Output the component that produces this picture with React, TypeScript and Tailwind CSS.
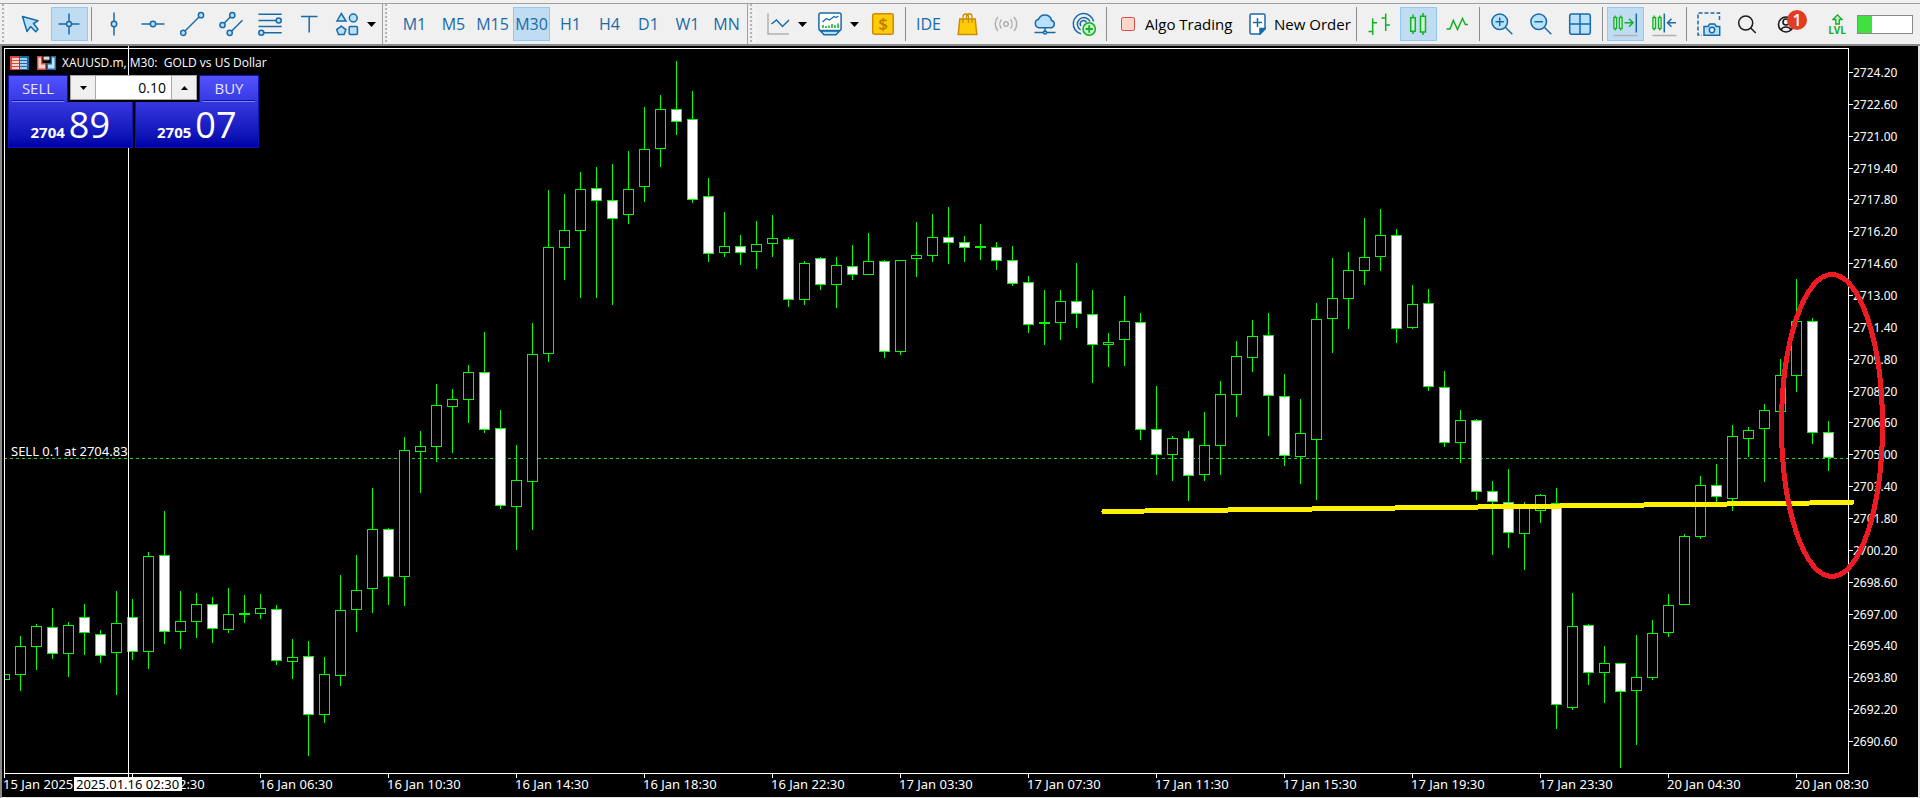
import React, { useState } from 'react';
import clsx from 'clsx';

const BLUE = '#1a6aa8';
const SKY = '#b8e2fb';
const GREEN = '#12b024';
const MINT = '#c9f5cf';
const GRAY = '#b0b0b0';

// [high, body top, body bottom, low, bearish]
type Candle = [number, number, number, number, number];

const candles: Candle[] = [
  [674, 674, 680, 680, 0],
  [636, 646, 675, 691, 0],
  [624, 626, 647, 670, 0],
  [608, 627, 654, 659, 1],
  [622, 625, 654, 677, 0],
  [604, 617, 633, 655, 1],
  [630, 634, 656, 663, 1],
  [591, 623, 653, 695, 0],
  [599, 617, 652, 660, 1],
  [552, 556, 652, 669, 0],
  [511, 555, 632, 644, 1],
  [591, 621, 632, 649, 0],
  [593, 604, 622, 638, 0],
  [597, 604, 629, 643, 1],
  [588, 614, 630, 633, 0],
  [595, 613, 615, 623, 0],
  [594, 608, 614, 619, 0],
  [605, 609, 661, 665, 1],
  [639, 657, 662, 679, 0],
  [641, 656, 715, 756, 1],
  [657, 674, 715, 723, 0],
  [575, 610, 676, 686, 0],
  [555, 590, 610, 632, 0],
  [488, 529, 589, 613, 0],
  [528, 529, 577, 605, 1],
  [437, 450, 577, 606, 0],
  [431, 446, 452, 493, 0],
  [384, 405, 447, 462, 0],
  [389, 399, 407, 453, 0],
  [365, 372, 400, 423, 0],
  [332, 372, 430, 433, 1],
  [410, 428, 506, 509, 1],
  [445, 480, 507, 550, 0],
  [323, 354, 482, 530, 0],
  [190, 247, 354, 362, 0],
  [194, 230, 248, 280, 0],
  [172, 189, 231, 298, 0],
  [167, 188, 201, 298, 1],
  [164, 200, 219, 305, 1],
  [151, 189, 215, 224, 0],
  [107, 149, 187, 202, 0],
  [95, 109, 149, 167, 0],
  [61, 109, 122, 135, 1],
  [91, 119, 200, 203, 1],
  [178, 196, 254, 262, 1],
  [212, 246, 253, 257, 0],
  [235, 246, 253, 265, 1],
  [221, 244, 252, 269, 0],
  [215, 238, 244, 257, 0],
  [237, 239, 300, 307, 1],
  [261, 263, 300, 305, 0],
  [257, 258, 285, 290, 1],
  [257, 265, 285, 308, 0],
  [245, 266, 275, 280, 1],
  [233, 261, 275, 275, 0],
  [260, 261, 352, 358, 1],
  [260, 260, 352, 355, 0],
  [222, 255, 259, 277, 0],
  [214, 237, 256, 262, 0],
  [207, 237, 243, 264, 1],
  [236, 242, 248, 262, 1],
  [224, 246, 248, 260, 0],
  [242, 247, 261, 270, 1],
  [246, 260, 284, 286, 1],
  [276, 282, 325, 333, 1],
  [290, 322, 324, 345, 0],
  [290, 301, 323, 340, 0],
  [263, 301, 314, 328, 1],
  [290, 314, 345, 383, 1],
  [333, 342, 345, 367, 0],
  [296, 321, 340, 366, 0],
  [313, 322, 430, 440, 1],
  [386, 429, 455, 475, 1],
  [436, 438, 455, 481, 0],
  [431, 438, 476, 501, 1],
  [412, 445, 475, 481, 0],
  [381, 394, 446, 475, 0],
  [341, 356, 395, 417, 0],
  [320, 336, 358, 372, 0],
  [313, 335, 396, 436, 1],
  [374, 396, 456, 466, 1],
  [399, 433, 457, 484, 0],
  [303, 319, 440, 500, 0],
  [258, 298, 319, 353, 0],
  [252, 270, 299, 329, 0],
  [218, 257, 271, 285, 0],
  [209, 235, 257, 271, 0],
  [229, 235, 329, 343, 1],
  [285, 304, 328, 329, 0],
  [289, 303, 387, 391, 1],
  [371, 387, 443, 447, 1],
  [410, 420, 443, 463, 0],
  [419, 420, 492, 500, 1],
  [481, 491, 502, 555, 1],
  [469, 502, 533, 548, 1],
  [502, 505, 534, 570, 0],
  [494, 495, 511, 523, 0],
  [488, 503, 705, 729, 1],
  [593, 626, 708, 710, 0],
  [624, 625, 673, 685, 1],
  [646, 663, 673, 703, 0],
  [663, 663, 692, 768, 1],
  [635, 677, 691, 745, 0],
  [620, 633, 678, 680, 0],
  [594, 605, 633, 637, 0],
  [534, 536, 605, 605, 0],
  [476, 485, 537, 539, 0],
  [464, 485, 497, 502, 1],
  [425, 436, 499, 511, 0],
  [427, 430, 439, 457, 0],
  [404, 410, 429, 482, 0],
  [359, 375, 412, 412, 0],
  [279, 321, 376, 392, 0],
  [318, 321, 433, 444, 1],
  [421, 432, 458, 471, 1],
];

const prices = Array.from({ length: 22 }, (_, i) => (2724.2 - i * 1.6).toFixed(2));

const times = [
  '15 Jan 2025',
  '16 Jan 02:30',
  '16 Jan 06:30',
  '16 Jan 10:30',
  '16 Jan 14:30',
  '16 Jan 18:30',
  '16 Jan 22:30',
  '17 Jan 03:30',
  '17 Jan 07:30',
  '17 Jan 11:30',
  '17 Jan 15:30',
  '17 Jan 19:30',
  '17 Jan 23:30',
  '20 Jan 04:30',
  '20 Jan 08:30',
];

const timeframes = ['M1', 'M5', 'M15', 'M30', 'H1', 'H4', 'D1', 'W1', 'MN'];

interface IconProps {
  children: React.ReactNode;
  color?: string;
  width?: number;
}

const Icon = ({ children, color = BLUE, width = 1.5 }: IconProps) => (
  <svg
    className="h-[26px] w-[25px] shrink-0"
    viewBox="0 0 25 26"
    fill="none"
    stroke={color}
    strokeWidth={width}
    aria-hidden="true"
  >
    {children}
  </svg>
);

interface ToolProps {
  label: string;
  active?: boolean;
  onClick?: () => void;
  children: React.ReactNode;
}

const Tool = ({ label, active, onClick, children }: ToolProps) => (
  <button
    type="button"
    aria-label={label}
    onClick={onClick}
    className={clsx(
      'flex h-[34px] w-[37px] shrink-0 items-center justify-center border text-base leading-5 text-[#1a6aa8]',
      active ? 'border-[#90c8f6] bg-[#c0dcf3]' : 'border-transparent'
    )}
  >
    {children}
  </button>
);

const Divider = () => (
  <div className="flex h-[34px] w-1 shrink-0 pl-px">
    <div className="w-px bg-[#8c8c8c]" />
  </div>
);

const Grip = () => (
  <div className="flex w-2 shrink-0 gap-[2px] self-stretch pl-[2px]">
    <div className="w-[2px] bg-[repeating-linear-gradient(180deg,#b4b4b4_0_2px,transparent_2px_4px)]" />
    <div className="w-px bg-[repeating-linear-gradient(180deg,#ffffff_0_2px,transparent_2px_4px)]" />
  </div>
);

const Caret = () => (
  <svg className="h-[5px] w-[9px] shrink-0" viewBox="0 0 9 5" aria-hidden="true">
    <path d="M0 0h9L4.500 5z" fill="#000" />
  </svg>
);

const MiniCandles = () => (
  <g stroke={GREEN} strokeWidth={1.3} fill={MINT}>
    <path d="M2.200 4.500v15M7.700 4.500v15" />
    <rect x="0.900" y="6.500" width="2.700" height="11" />
    <rect x="6.400" y="6.500" width="2.700" height="11" />
  </g>
);

const Toolbar = () => {
  const [tool, setTool] = useState('Crosshair');
  const [frame, setFrame] = useState('M30');

  return (
    <header className="flex flex-col overflow-hidden bg-[#f0f0f0] pt-[3px]">
      <div className="flex h-[43px] items-center whitespace-nowrap border-t border-b-2 border-t-[#a0a0a0] border-b-[#8a8a8a]">
        {/* Drawing tools */}
        <div className="flex shrink-0 items-center self-stretch border-r border-[#a0a0a0] pr-1">
          <Grip />
          <div className="flex items-center gap-[2px] pl-1">
            <Tool label="Cursor" active={tool === 'Cursor'} onClick={() => setTool('Cursor')}>
              <Icon>
                <path d="M4.500 5.500 20 9.800l-4.500 2.700 4.500 5.700-2.300 2.600-5-5.300-3.700 5z" fill={SKY} strokeLinejoin="round" />
              </Icon>
            </Tool>
            <Tool label="Crosshair" active={tool === 'Crosshair'} onClick={() => setTool('Crosshair')}>
              <Icon>
                <path d="M1.500 13h21M12 2.500v21" />
                <circle cx="12" cy="13" r="2.500" fill={SKY} />
              </Icon>
            </Tool>
            <Divider />
            <Tool label="Vertical line" active={tool === 'Vertical'} onClick={() => setTool('Vertical')}>
              <Icon>
                <path d="M12 1.500v23" />
                <circle cx="12" cy="13" r="2.700" fill={SKY} />
              </Icon>
            </Tool>
            <Tool label="Horizontal line" active={tool === 'Horizontal'} onClick={() => setTool('Horizontal')}>
              <Icon>
                <path d="M0.500 13h23" />
                <circle cx="12" cy="13" r="2.700" fill={SKY} />
              </Icon>
            </Tool>
            <Tool label="Trendline" active={tool === 'Trend'} onClick={() => setTool('Trend')}>
              <Icon>
                <path d="M3 22 21 4" />
                <circle cx="3.200" cy="21.800" r="2.600" fill={SKY} />
                <circle cx="21" cy="4.200" r="2.600" fill={SKY} />
              </Icon>
            </Tool>
            <Tool label="Channel" active={tool === 'Channel'} onClick={() => setTool('Channel')}>
              <Icon>
                <path d="M3.300 14l10-10M10.700 22 23.500 9.300" />
                <circle cx="3.500" cy="14" r="2.600" fill={SKY} />
                <circle cx="13.300" cy="4.200" r="2.600" fill={SKY} />
                <circle cx="10.700" cy="21.800" r="2.600" fill={SKY} />
              </Icon>
            </Tool>
            <Tool label="Fibonacci" active={tool === 'Fibonacci'} onClick={() => setTool('Fibonacci')}>
              <Icon>
                <path d="M0.500 3.300h23.200M0.500 9.500h23.200M0.500 15.500h23.200M0.500 21.700h23.200" />
                <circle cx="20.700" cy="9.500" r="2.500" fill={SKY} />
                <circle cx="3.300" cy="21.700" r="2.500" fill={SKY} />
              </Icon>
            </Tool>
            <Tool label="Text" active={tool === 'Text'} onClick={() => setTool('Text')}>
              <Icon>
                <path d="M4 5.500h16.500M12.200 5.500v16" />
              </Icon>
            </Tool>
            <button type="button" aria-label="Shapes" className="flex h-[34px] w-12 shrink-0 items-center gap-[7px] pl-[5px]">
              <Icon>
                <path d="M6.300 2.500 2 10h9z" fill={SKY} />
                <circle cx="18.300" cy="7" r="3.900" fill={SKY} />
                <path d="M6.300 15.200l4.600 3.400-1.800 5H3.500l-1.800-5z" fill={SKY} />
                <rect x="14.200" y="15.400" width="8.200" height="8.200" rx="1" fill={SKY} />
              </Icon>
              <Caret />
            </button>
          </div>
        </div>

        {/* Timeframes */}
        <div className="flex shrink-0 items-center self-stretch border-r border-[#a0a0a0] pr-[2px]">
          <Grip />
          <div className="flex items-center gap-[2px] pl-[5px]">
            {timeframes.map((name) => (
              <Tool key={name} label={name} active={frame === name} onClick={() => setFrame(name)}>
                {name}
              </Tool>
            ))}
          </div>
        </div>

        {/* Standard */}
        <div className="flex min-w-0 flex-1 items-center self-stretch">
          <Grip />
          <div className="flex min-w-0 flex-1 items-center gap-[2px] pl-1">
            <button type="button" aria-label="Line studies" className="flex h-[34px] w-[50px] shrink-0 items-center gap-[7px] pl-[6px]">
              <Icon>
                <path d="M2 2.500V23h21" stroke={GRAY} />
                <path d="M5.500 13l5-4 6 6.500 6.500-6.500" />
              </Icon>
              <Caret />
            </button>
            <button type="button" aria-label="Indicators" className="flex h-[34px] w-[51px] shrink-0 items-center gap-[7px] pl-[6px]">
              <Icon>
                <path d="M2.500 20 6 23.700h12l3.500-3.700z" fill={SKY} />
                <rect x="0.900" y="2" width="22.200" height="17.500" rx="2" fill="#fff" />
                <path d="M4.500 11l4-3.500 3 1.500 4.500-3.500 2 1 2.500-1.500" strokeWidth={1.3} />
                <path d="M5 14v3M8 15v2M11 14.500v2.500M14 13v4M17 14v3M20 12.500v4.500" stroke={GREEN} />
              </Icon>
              <Caret />
            </button>
            <Tool label="Quotes">
              <Icon color="#c98d08">
                <rect x="1.700" y="2.700" width="20.600" height="20.600" rx="2" fill="#fdcb08" />
                <text x="12" y="19" textAnchor="middle" fontSize="17" fontWeight="600" fill="#b87d05" stroke="none">$</text>
              </Icon>
            </Tool>
            <Divider />
            <Tool label="IDE">IDE</Tool>
            <Tool label="Market">
              <Icon color="#c98d08">
                <path d="M4.800 8h15.400l1.600 15.500H3.200z" fill="#fdcb08" />
                <path d="M8 12V6c0-4 5.500-4 5.500 0v6M11.500 8V5c0-3 5.500-3 5.500 0v7" strokeWidth={1.3} />
              </Icon>
            </Tool>
            <Tool label="Signals">
              <Icon color={GRAY}>
                <circle cx="12" cy="13" r="2.300" />
                <path d="M7.500 8.500a7 7 0 0 0 0 9M16.500 8.500a7 7 0 0 1 0 9M4 6a10.500 10.500 0 0 0 0 14M20 6a10.500 10.500 0 0 1 0 14" />
              </Icon>
            </Tool>
            <Tool label="Virtual hosting">
              <Icon>
                <path d="M6 16.700a4.300 4.300 0 0 1-.5-8.400 6.800 6.800 0 0 1 13 1.200 3.700 3.700 0 0 1 0 7.200z" fill={SKY} />
                <path d="M12 17v4M1.500 21.500h21" />
                <circle cx="12" cy="21.500" r="1.600" fill={SKY} />
              </Icon>
            </Tool>
            <Tool label="Add service">
              <Icon>
                <path d="M9 22.800A10.300 10.300 0 1 1 21.600 10.500M8.500 18.800A6.600 6.600 0 1 1 18 10.500M9 15a3.300 3.300 0 1 1 5.500-3.500" />
                <circle cx="17.200" cy="18" r="6.200" fill={MINT} stroke={GREEN} />
                <path d="M13.500 18h7.400M17.200 14.300v7.400" stroke={GREEN} strokeWidth={1.8} />
              </Icon>
            </Tool>
            <Divider />
            <button type="button" className="flex h-[34px] w-32 shrink-0 items-center gap-[10px] pl-[10px] text-[15px] text-black">
              <span className="h-[14px] w-[14px] rounded-[2px] border border-[#de5044] bg-[#fdd5cb]" />
              Algo Trading
            </button>
            <button type="button" className="flex h-[34px] w-28 shrink-0 items-center gap-2 pl-2 text-[15px] text-black">
              <svg className="h-[22px] w-[17px] shrink-0" viewBox="0 0 17 22" fill="none" stroke={BLUE} strokeWidth={1.5} aria-hidden="true">
                <path d="M2.500 0.900h12a1.500 1.500 0 0 1 1.500 1.500V16l-5 5H2.500A1.500 1.500 0 0 1 1 19.500V2.400A1.500 1.500 0 0 1 2.500 0.900z" fill="#fff" />
                <path d="M16 15.500h-5V21z" fill={BLUE} />
                <path d="M4 9.500h9M8.500 5v9" />
              </svg>
              New Order
            </button>
            <Divider />
            <Tool label="Bar chart">
              <Icon color={GREEN}>
                <path d="M5.700 7.500v16.500M1.500 20.500h4.200M5.700 11.700H10M18.700 2.500V20M14.500 7h4.200M18.700 14H23" />
              </Icon>
            </Tool>
            <Tool label="Candlesticks" active>
              <Icon color={GREEN}>
                <path d="M7 3.500v19.500M17 2v22" />
                <rect x="4.700" y="6.700" width="4.600" height="13.600" fill={MINT} />
                <rect x="14.500" y="5.300" width="5" height="15.700" fill={MINT} />
              </Icon>
            </Tool>
            <Tool label="Line chart">
              <Icon color={GREEN}>
                <path d="M1.500 18H5L8.300 9.500l4.200 9L17.500 7.500l2.800 6H23" />
              </Icon>
            </Tool>
            <Divider />
            <Tool label="Zoom in">
              <Icon>
                <circle cx="9.700" cy="10.700" r="7.800" fill={SKY} />
                <path d="M15.300 16.300l7 7M5.500 10.700h8.400M9.700 6.500v8.400" />
              </Icon>
            </Tool>
            <Tool label="Zoom out">
              <Icon>
                <circle cx="9.700" cy="10.700" r="7.800" fill={SKY} />
                <path d="M15.300 16.300l7 7M5.500 10.700h8.400" />
              </Icon>
            </Tool>
            <Tool label="Tile windows">
              <Icon>
                <rect x="1.700" y="3" width="20.600" height="20.300" rx="2" fill={SKY} />
                <path d="M12 3v20.300M1.700 13h20.600" />
              </Icon>
            </Tool>
            <Divider />
            <Tool label="Auto scroll" active>
              <Icon>
                <MiniCandles />
                <path d="M11.500 11.700H20M16 7.700l4 4-4 4" stroke={GREEN} />
                <path d="M23.300 2.500v19" />
                <path d="M0.500 24.500h24" stroke={GRAY} />
              </Icon>
            </Tool>
            <Tool label="Chart shift">
              <Icon>
                <MiniCandles />
                <path d="M12.300 2.500v19M24 11.700h-8.500M19.500 7.700l-4 4 4 4" />
                <path d="M0.500 24.500h24" stroke={GRAY} />
              </Icon>
            </Tool>
            <Divider />
            <Tool label="Screenshot">
              <Icon>
                <path d="M22.500 9V2H1v22h4" strokeDasharray="4 2" />
                <path d="M7 24.300V15.500h4l1.700-2.500h5l1.700 2.500h3.300v8.800z" fill={SKY} />
                <circle cx="15" cy="19" r="2.700" fill="#e8f6fe" />
              </Icon>
            </Tool>
            <Tool label="Search">
              <Icon color="#1a1a1a">
                <circle cx="9.700" cy="12" r="7" />
                <path d="M14.700 17l5 5" />
              </Icon>
            </Tool>
            <button type="button" aria-label="Account, 1 notification" className="relative flex h-[34px] w-[43px] shrink-0 items-center pl-[5px]">
              <Icon color="#1a1a1a" width={1.6}>
                <circle cx="12" cy="13.500" r="7.500" />
                <circle cx="12" cy="11" r="3" />
                <path d="M7 19c1.500-4 8.500-4 10 0" />
              </Icon>
              <span className="absolute top-[3px] right-[5px] flex h-5 w-5 items-center justify-center rounded-full bg-[#e23c22] text-base leading-5 font-semibold text-white">
                1
              </span>
            </button>
            <div className="ml-auto flex shrink-0 items-center gap-[11px] pr-[7px]">
              <div className="flex flex-col items-center">
                <svg className="h-[11px] w-[11px]" viewBox="0 0 11 11" fill={MINT} stroke={GREEN} strokeWidth={1.3} aria-hidden="true">
                  <path d="M5.500 0.900 10 5.500H7.300V10H3.700V5.500H1z" />
                </svg>
                <span className="text-[10px] leading-[10px] font-bold text-[#12b024]">LVL</span>
              </div>
              <div className="h-[19px] w-14 border border-[#8a8a8a] bg-white">
                <div className="h-full w-1/4 bg-[#40e040]" />
              </div>
            </div>
          </div>
        </div>
      </div>
    </header>
  );
};

const PriceChart = () => (
  <svg className="block h-auto w-full font-['Noto_Sans',sans-serif]" viewBox="2 46 1916 751" fontSize="13" fill="#fff" role="img" aria-label="XAUUSD.m M30 candlestick chart">
    <g shapeRendering="crispEdges">
      <path d="M1848.500 48.500H4.500V777M4 773.500h1845M1848.500 48v726" stroke="#fff" fill="none" />
      <path d="M4 458.500h1844" stroke="#32cd32" strokeDasharray="3 3" />

      {candles.map(([high, top, bottom, low, bearish], i) => {
        const x = 4 + i * 16;
        // the first bar is cut off by the left edge of the plot
        const left = i === 0 ? x : x - 5;
        return (
          <g key={i}>
            {i > 0 && <rect x={x} y={high} width="1" height={low - high} fill="#0f0" />}
            <rect
              x={left + 0.5}
              y={top + 0.5}
              width={x + 5 - left}
              height={bottom - top - 1}
              fill={bearish ? '#fff' : '#000'}
              stroke="#0f0"
            />
          </g>
        );
      })}

      <path d="M128.500 46v731M4.500 48v729" stroke="#fff" />
    </g>

    <g fontSize="12">
      {prices.map((price, i) => {
        const y = 72 + Math.round((i * 669) / 21);
        return (
          <g key={price}>
            <rect x="1849" y={y} width="4" height="1" />
            <text x="1853" y={y + 5}>{price}</text>
          </g>
        );
      })}
    </g>

    {times.map((time, i) => (
      <g key={time}>
        <rect x={4 + i * 128} y="774" width="1" height="4" />
        <text x={3 + i * 128} y="789">{time}</text>
      </g>
    ))}

    <text x="11" y="456">SELL 0.1 at 2704.83</text>

    {/* Crosshair time */}
    <rect x="74" y="777" width="108" height="14" />
    <text x="76" y="789" fill="#000">2025.01.16 02:30</text>

    {/* Drawn objects */}
    <g shapeRendering="crispEdges" fill="none" strokeWidth="5" strokeLinecap="round">
      <path d="M1104 511.500 1852 502.500" stroke="#fff200" />
      <ellipse cx="1832" cy="425.500" rx="50.500" ry="151" stroke="#ed1c24" />
    </g>
  </svg>
);

const TradePanel = () => {
  const [volume, setVolume] = useState('0.10');
  const step = (delta: number) => setVolume(Math.max(0.01, Number(volume) + delta).toFixed(2));

  return (
    <div className="w-[251px] bg-black text-white">
      <div className="flex justify-between">
        <button type="button" className="flex h-[27px] w-[60px] flex-col items-center justify-between border border-b-0 border-[#1010b4] bg-linear-to-b from-[#5252ff] to-[#3838e2] px-[3px] text-[15px] leading-6 text-[#e4e4ff]">
          SELL
          <span className="h-[2px] w-full border-t border-[#1010a0] bg-[#8080ff]" />
        </button>
        <div className="flex h-[25px] w-[127px] border border-[#a8a8a8] bg-[#a8a8a8]">
          <button type="button" aria-label="Decrease volume" onClick={() => step(-0.01)} className="flex w-6 items-center justify-center bg-[#f0f0f0]">
            <svg className="h-1 w-[7px]" viewBox="0 0 7 4" aria-hidden="true"><path d="M0 0h7L3.500 4z" /></svg>
          </button>
          <input
            aria-label="Volume"
            value={volume}
            onChange={(e) => setVolume(e.target.value)}
            className="mx-px w-0 min-w-0 flex-1 bg-white pr-[5px] text-right text-sm leading-5 text-black outline-none"
          />
          <button type="button" aria-label="Increase volume" onClick={() => step(0.01)} className="flex w-6 items-center justify-center bg-[#f0f0f0]">
            <svg className="h-1 w-[7px]" viewBox="0 0 7 4" aria-hidden="true"><path d="M0 4h7L3.500 0z" /></svg>
          </button>
        </div>
        <button type="button" className="flex h-[27px] w-[60px] flex-col items-center justify-between border border-b-0 border-[#1010b4] bg-linear-to-b from-[#5252ff] to-[#3838e2] px-[3px] text-[15px] leading-6 text-[#e4e4ff]">
          BUY
          <span className="h-[2px] w-full border-t border-[#1010a0] bg-[#8080ff]" />
        </button>
      </div>
      <div className="flex gap-[2px]">
        <button type="button" aria-label="Sell at 2704.89" className="flex h-[46px] flex-1 items-baseline justify-center gap-1 border border-t-0 border-[#1010b4] bg-linear-to-b from-[#3636e0] to-[#0000a8]">
          <span className="text-[15px] font-bold">2704</span>
          <span className="text-4xl leading-[46px]">89</span>
        </button>
        <button type="button" aria-label="Buy at 2705.07" className="flex h-[46px] flex-1 items-baseline justify-center gap-1 border border-t-0 border-[#1010b4] bg-linear-to-b from-[#3636e0] to-[#0000a8]">
          <span className="text-[15px] font-bold">2705</span>
          <span className="text-4xl leading-[46px]">07</span>
        </button>
      </div>
    </div>
  );
};

const ChartHeader = () => (
  <div className="flex items-center pl-[2px] text-xs leading-4 text-white">
    <svg className="h-[14px] w-[19px]" viewBox="0 0 19 14" aria-hidden="true">
      <rect width="10" height="14" rx="1" fill="#e0483c" />
      <rect x="9" width="10" height="14" rx="1" fill="#1a6aa8" />
      <path d="M2 3h7M2 6h7M2 9h7M2 12h7" stroke="#fff" strokeWidth="1.500" />
      <path d="M10 3h7M10 6h7M10 9h7M10 12h7" stroke="#d5efff" strokeWidth="1.500" />
    </svg>
    <svg className="ml-2 h-[14px] w-[19px]" viewBox="0 0 19 14" aria-hidden="true">
      <path d="M0.700 0.700h4v7h4v5.600h-8z" fill="#fdd5cb" stroke="#e0483c" strokeWidth="1.400" />
      <path d="M18.300 0.700h-4v7h-4v5.600h8z" fill={SKY} stroke={BLUE} strokeWidth="1.400" />
      <rect x="6.500" y="0.500" width="6" height="3.500" rx="1" fill="#ddd" stroke="#666" />
    </svg>
    <h1 className="ml-[6px] whitespace-pre">XAUUSD.m, M30:  GOLD vs US Dollar</h1>
  </div>
);

const App: React.FC = () => (
  <div className="bg-[#f0f0f0] font-['Open_Sans','Noto_Sans',sans-serif]">
    <Toolbar />
    <main className="relative border-r-2 border-b border-l-2 border-r-[#e3e3e3] border-b-[#e3e3e3] border-l-[#8a8a8a] bg-black">
      <PriceChart />
      <div className="absolute top-[9px] left-[6px] flex flex-col gap-1">
        <ChartHeader />
        <TradePanel />
      </div>
    </main>
  </div>
);

export default App;
